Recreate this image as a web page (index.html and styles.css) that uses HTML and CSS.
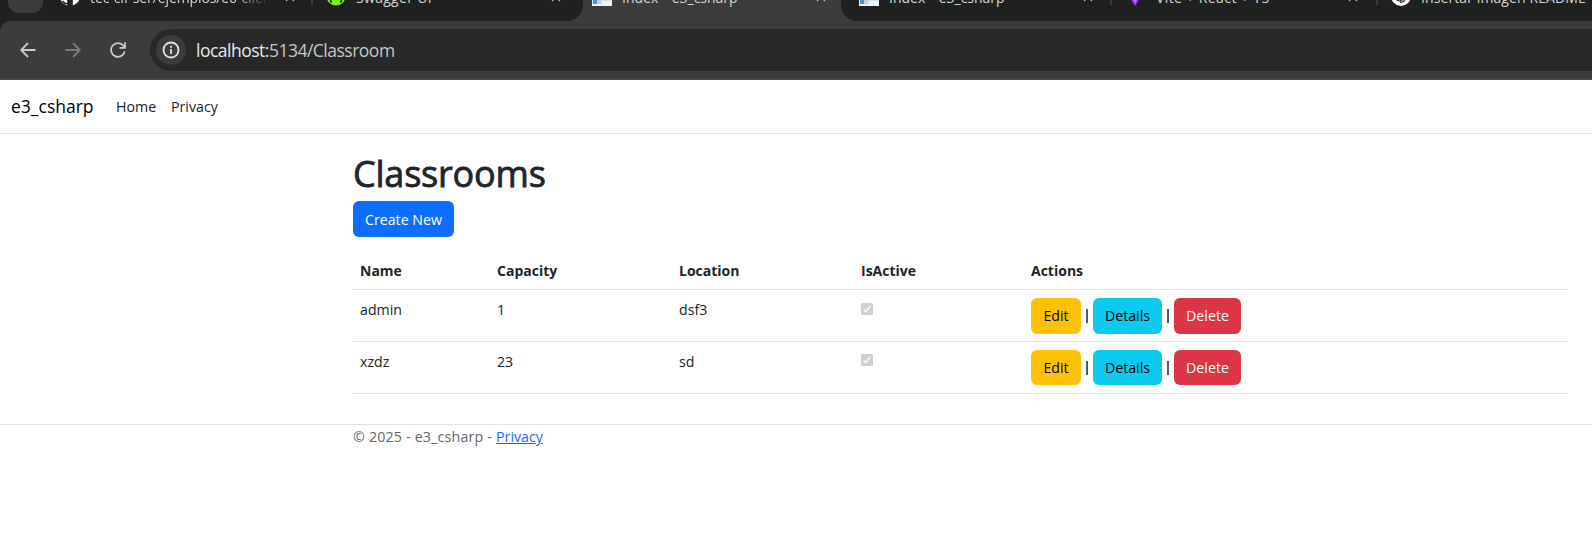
FILE: index.html
```html
<!DOCTYPE html>
<html lang="en">
<head>
<meta charset="utf-8">
<title>Index - e3_csharp</title>
<link rel="stylesheet" href="styles.css">
</head>
<body>
<div class="browser">
  <div class="tabs">
    <div class="tab tab-search"><span class="search-btn"></span></div>
    <div class="tab tab-github">
      <svg class="fav" width="20" height="20" viewBox="0 0 20 20"><circle cx="10" cy="10" r="10" fill="#fff"/><path d="M8 20v-2.500C5 18.500 4 16.500 2.500 15M8 20v-6h4v6z" fill="none" stroke="#1f2120" stroke-width="1.600"/><path d="M8 14h4v6H8z" fill="#1f2120"/></svg>
      <span class="title fade">tec-clf-ser/ejemplos/e6-clients</span>
      <svg class="close" width="10" height="10" viewBox="0 0 10 10"><path d="M1 1l8 8M9 1l-8 8"/></svg>
    </div>
    <div class="tab tab-swagger">
      <i class="sep"></i>
      <svg class="fav" width="20" height="20" viewBox="0 0 20 20"><circle cx="10" cy="10" r="9.500" fill="#85ea2d"/><path d="M6 8q-1.500 0-1.500 2T3 12q1.500 0 1.500 2T6 16M14 8q1.500 0 1.500 2T17 12q-1.500 0-1.500 2T14 16" fill="none" stroke="#1f2120" stroke-width="1.500"/></svg>
      <span class="title">Swagger UI</span>
      <svg class="close" width="10" height="10" viewBox="0 0 10 10"><path d="M1 1l8 8M9 1l-8 8"/></svg>
    </div>
    <div class="tab tab-active">
      <svg class="fav" width="20" height="20" viewBox="0 0 20 20"><path fill="#eef1f7" d="M0 0h20v20H0z"/><path fill="#4396d0" d="M1 3h4v15H1z"/><path fill="#b9d5ea" d="M5 10h4v8H5z"/><path fill="#d8dbe5" d="M9 14h10v1H9zM9 10h1v9H9z"/></svg>
      <span class="title index">Index - e3_csharp</span>
      <svg class="close" width="10" height="10" viewBox="0 0 10 10"><path d="M1 1l8 8M9 1l-8 8"/></svg>
    </div>
    <div class="tab tab-index">
      <svg class="fav" width="20" height="20" viewBox="0 0 20 20"><path fill="#eef1f7" d="M0 0h20v20H0z"/><path fill="#4396d0" d="M1 3h4v15H1z"/><path fill="#b9d5ea" d="M5 10h4v8H5z"/><path fill="#d8dbe5" d="M9 14h10v1H9zM9 10h1v9H9z"/></svg>
      <span class="title index">Index - e3_csharp</span>
      <svg class="close" width="10" height="10" viewBox="0 0 10 10"><path d="M1 1l8 8M9 1l-8 8"/></svg>
    </div>
    <div class="tab tab-vite">
      <i class="sep"></i>
      <svg class="fav" width="20" height="20" viewBox="0 0 20 20"><path fill="#a53cff" d="M0 3l10 17L20 3l-10 2z"/><path fill="#ffb42e" d="M9 5h4l-2.500 12z"/></svg>
      <span class="title">Vite + React + TS</span>
      <svg class="close" width="10" height="10" viewBox="0 0 10 10"><path d="M1 1l8 8M9 1l-8 8"/></svg>
    </div>
    <div class="tab tab-chat">
      <i class="sep"></i>
      <svg class="fav" width="20" height="20" viewBox="0 0 20 20"><circle cx="10" cy="10" r="10" fill="#fff"/><path d="M5 11q0 4 4 4l5-3M8 11l4 3M9 16q4 1 5-3v-3" fill="none" stroke="#222" stroke-width="1.200"/></svg>
      <span class="title readme">Insertar imagen README</span>
    </div>
  </div>
  <div class="toolbar">
    <svg class="nav-icon" width="16" height="16" viewBox="0 0 16 16"><path d="M15.500 8H1.500M8 1L1.200 8L8 15"/></svg>
    <svg class="nav-icon dim" width="16" height="16" viewBox="0 0 16 16"><path d="M.5 8h14M8 1l6.800 7L8 15"/></svg>
    <svg class="nav-icon" width="16" height="16" viewBox="0 0 16 16"><path d="M14.700 9.500A6.900 6.900 0 1 1 13.500 3.800L15 5.800M15 .2v5.700H9.500"/></svg>
    <div class="address">
      <span class="info"><svg width="18" height="18" viewBox="0 0 18 18"><circle cx="9" cy="9" r="7.500" fill="none" stroke="#e3e3e3" stroke-width="1.800"/><path d="M9 8v5M9 4.700v2" stroke="#e3e3e3" stroke-width="1.800"/></svg></span>
      <span class="url"><b>localhost:</b>5134/Classroom</span>
    </div>
  </div>
</div>
<header class="navbar">
  <a class="brand">e3_csharp</a>
  <a class="link home">Home</a>
  <a class="link privacy">Privacy</a>
</header>
<main class="content">
  <h1>Classrooms</h1>
  <a class="btn primary">Create New</a>
  <table>
    <thead><tr><th class="c1">Name</th><th class="c2">Capacity</th><th class="c3">Location</th><th class="c4">IsActive</th><th>Actions</th></tr></thead>
    <tbody>
      <tr><td>admin</td><td>1</td><td>dsf3</td><td><svg class="check" width="12" height="12" viewBox="0 0 12 12"><rect width="12" height="12" rx="1.500" fill="#d0d0d0"/><path d="M2.500 6.300l2.300 2.300L9.500 3" fill="none" stroke="#f7f7f7" stroke-width="1.700"/></svg></td>
      <td><div class="actions"><a class="btn edit">Edit</a><i></i><a class="btn details">Details</a><i></i><a class="btn delete">Delete</a></div></td></tr>
      <tr class="last"><td>xzdz</td><td>23</td><td>sd</td><td><svg class="check" width="12" height="12" viewBox="0 0 12 12"><rect width="12" height="12" rx="1.500" fill="#d0d0d0"/><path d="M2.500 6.300l2.300 2.300L9.500 3" fill="none" stroke="#f7f7f7" stroke-width="1.700"/></svg></td>
      <td><div class="actions"><a class="btn edit">Edit</a><i></i><a class="btn details">Details</a><i></i><a class="btn delete">Delete</a></div></td></tr>
    </tbody>
  </table>
</main>
<footer class="footer"><span>© 2025 - e3_csharp -</span><a>Privacy</a></footer>
</body>
</html>
```
FILE: styles.css
```css
* { box-sizing: border-box; }
body { margin: 0; height: 555px; overflow: hidden; background: #fff; color: #212529; font: 14.2px/22px "Open Sans", "Noto Sans", sans-serif; }
a, span, th, td, h1 { white-space: nowrap; }

.browser { height: 80px; background: #1f2120; }
.tabs { display: flex; height: 21px; background: #3c3c3c; overflow: hidden; }
.tab { display: flex; height: 21px; flex: none; background: #1f2120; color: #d5d7d6; }
.tab-search { width: 48px; padding-left: 8px; }
.search-btn { width: 35px; height: 13px; background: #3c3c3c; border-radius: 0 0 11px 11px; }
.tab .fav { flex: none; margin-top: -14px; }
.tab .title { font-size: 14px; line-height: 18px; margin-top: -11px; height: 22px; }
.tab .title.index { word-spacing: .8px; }
.tab .title.readme { letter-spacing: .1px; }
.tab .close { margin: -8px 0 0 auto; fill: none; stroke: #bfc1c0; stroke-width: 1.200; flex: none; }
.sep { flex: none; width: 2px; height: 5px; margin-right: 13px; background: #3c3c3c; }
.tab-github { width: 263px; padding: 0 16px 0 12px; gap: 10px; }
.tab-github .title { width: 180px; overflow: hidden; letter-spacing: -.1px; }
.fade { -webkit-mask-image: linear-gradient(to right, #000 80%, transparent); mask-image: linear-gradient(to right, #000 80%, transparent); }
.tab-swagger { width: 272px; padding-right: 22px; border-bottom-right-radius: 16px; }
.tab-swagger .title { margin-left: 10px; letter-spacing: .3px; }
.tab-chat .title { margin-left: 10px; }
.tab-active { width: 258px; padding: 0 15px 0 9px; gap: 10px; background: #3c3c3c; }
.tab-index { width: 269px; padding: 0 17px 0 18px; gap: 10px; border-bottom-left-radius: 16px; }
.tab-vite { width: 266px; padding-right: 18px; }
.tab-vite .sep { margin-right: 13px; }
.tab-vite .title { margin-left: 11px; letter-spacing: .4px; }
.tab-chat { width: 230px; }

.toolbar { display: flex; height: 59px; align-items: center; padding: 0 0 0 20px; background: #3c3c3c; border-bottom: 2px solid #464646; border-top-left-radius: 10px; }
.nav-icon { flex: none; margin-right: 29px; fill: none; stroke: #c9c9c9; stroke-width: 1.800; }
.nav-icon.dim { stroke: #7c7c7c; }
.address { display: flex; align-items: center; flex: 1; height: 42px; margin-left: -5px; padding-left: 6px; border-radius: 21px 0 0 21px; background: #282828; }
.info { display: flex; align-items: center; justify-content: center; width: 30px; height: 30px; border-radius: 50%; background: #3c3c3c; }
.url { margin: 1px 0 1px 10px; color: #c7c7c7; font-size: 17.500px; letter-spacing: -.5px; }
.url b { font-weight: 400; color: #e8e8e8; }

.navbar { display: flex; align-items: center; height: 54px; border-bottom: 1px solid #dee2e6; padding-left: 11px; }
.brand { width: 105px; margin-top: -2px; font-size: 17.500px; color: #000; }
.home { width: 55px; }

.content { padding: 17px 24px 0 353px; }
h1 { margin: 0 0 4px; height: 46px; font-size: 36px; line-height: 46px; font-weight: 500; letter-spacing: -.2px; -webkit-text-stroke: .8px #212529; }
.btn { display: flex; align-items: center; justify-content: center; height: 36px; border-radius: 6px; color: #000; }
.primary { width: 101px; padding-top: 1px; background: #0d6efd; color: #fff; }
table { width: 1215px; margin-top: 15px; border-collapse: separate; border-spacing: 0; table-layout: fixed; }
th, td { padding: 8px 7px 7px; text-align: left; vertical-align: top; border-bottom: 1px solid #dee2e6; }
th { height: 38px; font-weight: 700; font-size: 14px; }
td { height: 52px; padding: 8px 7px 0; line-height: 24px; }
.c1 { width: 137px; } .c2 { width: 182px; } .c3 { width: 182px; } .c4 { width: 170px; }
.check { display: block; margin-top: 5px; }
.last .check { margin-top: 4px; }
.last .btn { height: 35px; }
.actions { display: flex; align-items: center; }
.actions i { width: 2px; height: 14px; margin: 0 5px; background: #4c5a6e; }
.edit { width: 50px; background: #ffc107; }
.details { width: 69px; background: #0dcaf0; }
.delete { width: 67px; background: #dc3545; color: #fff; }

.footer { margin-top: 30px; border-top: 1px solid #dee2e6; padding-left: 353px; color: #616568; display: flex; gap: 4px; line-height: 24px; }
.footer span { letter-spacing: .2px; }
.footer a { color: #0d6efd; text-decoration: underline; }
```
